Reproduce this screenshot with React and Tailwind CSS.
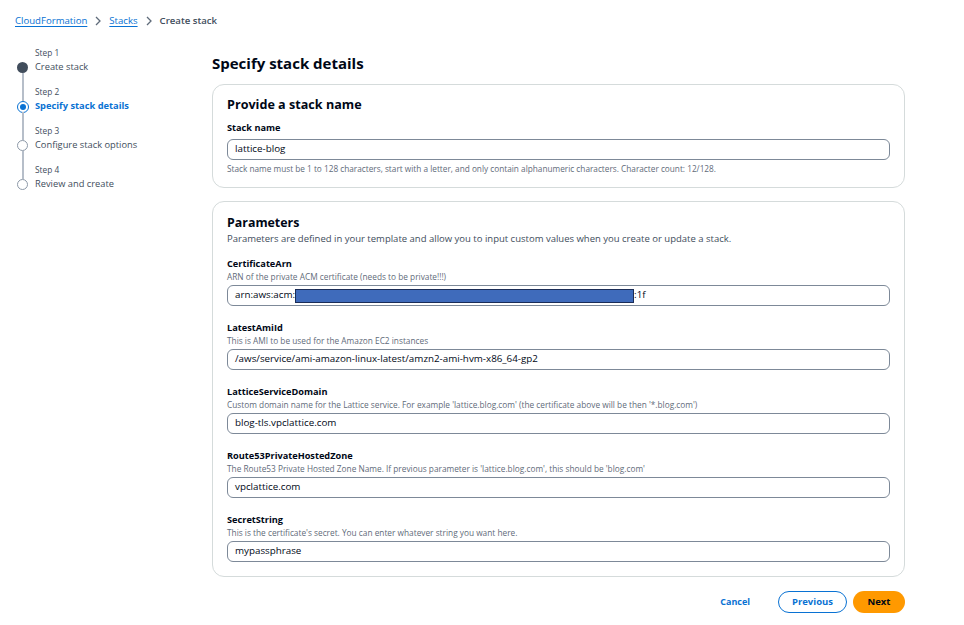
import React from "react";

const font = { fontFamily: '"Open Sans", "Noto Sans", sans-serif' };

function StepItem({ n, label, state, last }) {
  return (
    <div className="relative flex h-[39px]">
      <div className="absolute left-[0px] top-[21px] w-[12px] h-[12px]">
        {state === "done" && <div className="w-[11px] h-[11px] rounded-full bg-[#414d5c]" />}
        {state === "active" && (
          <div className="w-[12px] h-[12px] rounded-full border-[1.5px] border-[#0972d3] flex items-center justify-center bg-white">
            <div className="w-[6px] h-[6px] rounded-full bg-[#0972d3]" />
          </div>
        )}
        {state === "todo" && <div className="w-[11px] h-[11px] rounded-full border-[1.5px] border-[#8d99a8] bg-white" />}
      </div>
      {!last && <div className="absolute left-[5px] top-[32px] w-[1.5px] h-[28px] bg-[#b6bec9]" />}
      <div className="pl-[18px] pt-[6px]">
        <div className="text-[8.3px] leading-[12px] text-[#414d5c]">Step {n}</div>
        <div className={"text-[9.3px] leading-[14px] mt-[1px] " + (state === "active" ? "font-bold text-[#0972d3]" : "text-[#414d5c]")}>{label}</div>
      </div>
    </div>
  );
}

function Field({ name, desc, value, redacted }) {
  return (
    <div className="mt-[15px] first:mt-0">
      <div className="text-[9.2px] leading-[13px] font-bold text-[#000716]">{name}</div>
      <div className="text-[8.3px] leading-[11px] text-[#5f6b7a] mt-[1px]">{desc}</div>
      <div className="mt-[3px] h-[21px] rounded-[6px] border border-[#7d8998] bg-white flex items-center px-[7px] text-[9.8px] text-[#000716]">
        {redacted ? (
          <span className="flex items-center">
            <span>arn:aws:acm:</span>
            <span className="inline-block w-[339px] h-[14px] bg-[#3f6bbb] border border-[#1b2d57]" />
            <span>:1f</span>
          </span>
        ) : (
          value
        )}
      </div>
    </div>
  );
}

export default function App() {
  return (
    <div className="w-[964px] h-[625px] bg-white overflow-hidden text-[#000716]" style={font}>
      <div className="px-[15px] pt-[14px] flex items-center text-[9.6px] leading-[14px]">
        <span className="text-[#0972d3] underline underline-offset-2">CloudFormation</span>
        <span className="mx-[7px]">
          <svg width="8" height="10" viewBox="0 0 8 10"><path d="M2 1l4 4-4 4" fill="none" stroke="#5f6b7a" strokeWidth="1.3" /></svg>
        </span>
        <span className="text-[#0972d3] underline underline-offset-2">Stacks</span>
        <span className="mx-[7px]">
          <svg width="8" height="10" viewBox="0 0 8 10"><path d="M2 1l4 4-4 4" fill="none" stroke="#5f6b7a" strokeWidth="1.3" /></svg>
        </span>
        <span className="text-[#414d5c] font-semibold">Create stack</span>
      </div>
      <div className="flex mt-[13px]">
        <div className="w-[212px] pl-[17px]">
          <StepItem n={1} label="Create stack" state="done" />
          <StepItem n={2} label="Specify stack details" state="active" />
          <StepItem n={3} label="Configure stack options" state="todo" />
          <StepItem n={4} label="Review and create" state="todo" last />
        </div>
        <div className="w-[693px]">
          <div className="pt-[11px] text-[15px] leading-[22px] font-bold">Specify stack details</div>
          <div className="mt-[10px] rounded-[12px] border border-[#d5dbdb] px-[14px] pt-[10px] pb-[13px]">
            <div className="text-[12.6px] leading-[20px] font-bold">Provide a stack name</div>
            <div className="mt-[6px] text-[9.2px] leading-[13px] font-bold">Stack name</div>
            <div className="mt-[5px] h-[21px] rounded-[6px] border border-[#7d8998] flex items-center px-[7px] text-[9.8px]">lattice-blog</div>
            <div className="mt-[3px] text-[8.25px] leading-[11px] text-[#5f6b7a]">
              Stack name must be 1 to 128 characters, start with a letter, and only contain alphanumeric characters. Character count: 12/128.
            </div>
          </div>
          <div className="mt-[13px] rounded-[12px] border border-[#d5dbdb] px-[14px] pt-[12px] pb-[14px]">
            <div className="text-[12.4px] leading-[18px] font-bold">Parameters</div>
            <div className="text-[9.5px] leading-[13px] text-[#414d5c]">
              Parameters are defined in your template and allow you to input custom values when you create or update a stack.
            </div>
            <div className="mt-[12px]">
              <Field name="CertificateArn" desc="ARN of the private ACM certificate (needs to be private!!!)" redacted />
              <Field name="LatestAmiId" desc="This is AMI to be used for the Amazon EC2 instances" value="/aws/service/ami-amazon-linux-latest/amzn2-ami-hvm-x86_64-gp2" />
              <Field name="LatticeServiceDomain" desc="Custom domain name for the Lattice service. For example 'lattice.blog.com' (the certificate above will be then '*.blog.com')" value="blog-tls.vpclattice.com" />
              <Field name="Route53PrivateHostedZone" desc="The Route53 Private Hosted Zone Name. If previous parameter is 'lattice.blog.com', this should be 'blog.com'" value="vpclattice.com" />
              <Field name="SecretString" desc="This is the certificate's secret. You can enter whatever string you want here." value="mypassphrase" />
            </div>
          </div>
          <div className="mt-[14px] flex justify-end items-center gap-[6px] text-[9.5px] font-bold">
            <span className="text-[#0972d3] mr-[22px] text-[9px]">Cancel</span>
            <span className="h-[22px] w-[69px] justify-center rounded-full border-[1.5px] border-[#0972d3] text-[#0972d3] flex items-center">Previous</span>
            <span className="h-[22px] w-[52px] justify-center rounded-full bg-[#ff9900] text-[#000716] flex items-center">Next</span>
          </div>
        </div>
      </div>
    </div>
  );
}
